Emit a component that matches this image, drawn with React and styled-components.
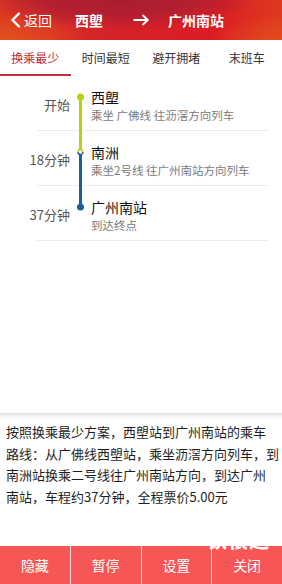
import React from 'react';
import styled, { createGlobalStyle } from 'styled-components';

const GlobalStyle = createGlobalStyle`
  html, body {
    margin: 0;
    padding: 0;
    background: #fff;
  }
  body {
    font-family: "Noto Sans CJK SC", "Noto Sans", sans-serif;
  }
`;

const Page = styled.div`
  position: relative;
  width: 282px;
  height: 584px;
  display: flex;
  flex-direction: column;
  overflow: hidden;
  background: #fff;
`;

const Header = styled.header`
  height: 40px;
  flex: none;
  display: flex;
  align-items: center;
  color: #fff;
  font-size: 14px;
  background:
    radial-gradient(ellipse 140px 34px at 120px -4px, #a91c33 0%, #b31f30 55%, rgba(179, 31, 48, 0) 100%),
    radial-gradient(ellipse 90px 30px at 0px 44px, #e2561c 0%, rgba(226, 86, 28, 0) 100%),
    radial-gradient(ellipse 80px 30px at 290px 44px, #e2501c 0%, rgba(226, 80, 28, 0) 100%),
    linear-gradient(90deg, #dd3a22 0%, #d42229 40%, #dc1c24 75%, #df3a1f 100%);
`;

const Back = styled.div`
  display: flex;
  align-items: center;
  gap: 3px;
  padding-left: 10px;
  width: 75px;
  box-sizing: border-box;
`;

const Station = styled.span`
  font-weight: 700;
  width: ${p => p.$w}px;
`;

const ArrowBox = styled.span`
  width: 35px;
  display: flex;
  align-items: center;
`;

const Tabs = styled.nav`
  height: 36px;
  flex: none;
  display: grid;
  grid-template-columns: repeat(4, 1fr);
  background: #fff;
`;

const Tab = styled.div`
  display: flex;
  align-items: center;
  justify-content: center;
  font-size: 12px;
  color: ${p => (p.$active ? '#c2282f' : '#333')};
  border-bottom: 2px solid ${p => (p.$active ? '#c2303a' : 'transparent')};
`;

const List = styled.section`
  flex: none;
`;

const Row = styled.div`
  margin: 0 14px 0 37px;
  height: 54px;
  border-bottom: 1px solid #ececec;
  display: grid;
  grid-template-columns: 33px 21px 1fr;
  align-items: center;
`;

const Label = styled.div`
  display: flex;
  justify-content: flex-end;
  font-size: 13px;
  color: #555;
  white-space: nowrap;
  margin-top: 3px;
`;

const Track = styled.svg`
  align-self: start;
  overflow: visible;
  display: block;
`;

const Info = styled.div`
  align-self: start;
  padding-top: 12px;
`;

const Title = styled.div`
  font-size: 14px;
  line-height: 18px;
  color: #111;
`;

const Sub = styled.div`
  margin-top: 1px;
  font-size: 11.5px;
  line-height: 16px;
  color: #7a7a7a;
  white-space: nowrap;
`;

const Spacer = styled.div`
  flex: 1;
`;

const Panel = styled.section`
  flex: none;
  height: 133px;
  box-sizing: border-box;
  padding: 8px 0 0 6px;
  font-size: 13px;
  line-height: 21.7px;
  color: #1e1e1e;
  background: linear-gradient(180deg, #e2e2e2 0px, #f6f6f6 4px, #fff 7px);
`;

const Line = styled.span`
  display: block;
  white-space: nowrap;
`;

const Bar = styled.footer`
  height: 38px;
  flex: none;
  display: grid;
  grid-template-columns: repeat(4, 1fr);
  gap: 1px;
  background: #fbdada;
`;

const BarButton = styled.div`
  background: #f75656;
  color: #fff;
  font-size: 14px;
  display: flex;
  align-items: center;
  justify-content: center;
`;

const Watermark = styled.div`
  position: absolute;
  right: 12px;
  bottom: 30px;
  font-size: 20px;
  font-weight: 700;
  color: #fff;
  letter-spacing: 1px;
`;

const GREEN = '#b9cf12';
const BLUE = '#1b5f98';

const rows = [
  {
    label: '开始',
    title: '西塱',
    sub: '乘坐 广佛线 往沥滘方向列车',
    track: (
      <>
        <line x1="10.5" y1="21" x2="10.5" y2="55" stroke={GREEN} strokeWidth="3" />
        <circle cx="10.5" cy="21" r="3.5" fill={GREEN} />
      </>
    ),
  },
  {
    label: '18分钟',
    title: '南洲',
    sub: '乘坐2号线 往广州南站方向列车',
    track: (
      <>
        <line x1="10.5" y1="0" x2="10.5" y2="19" stroke={GREEN} strokeWidth="3" />
        <line x1="10.5" y1="23" x2="10.5" y2="55" stroke={BLUE} strokeWidth="3" />
        <path d="M8 21 a2.5 2.5 0 0 1 5 0" fill="none" stroke={GREEN} strokeWidth="1.4" />
        <path d="M13 21 a2.5 2.5 0 0 1 -5 0" fill="none" stroke={BLUE} strokeWidth="1.4" />
      </>
    ),
  },
  {
    label: '37分钟',
    title: '广州南站',
    sub: '到达终点',
    track: (
      <>
        <line x1="10.5" y1="0" x2="10.5" y2="21" stroke={BLUE} strokeWidth="3" />
        <circle cx="10.5" cy="21" r="3.5" fill={BLUE} />
      </>
    ),
  },
];

const tabs = ['换乘最少', '时间最短', '避开拥堵', '末班车'];
const actions = ['隐藏', '暂停', '设置', '关闭'];

const App = () => {
  return (
    <Page>
      <GlobalStyle />
      <Header>
        <Back>
          <svg width="11" height="16" viewBox="0 0 11 16">
            <path d="M9 1.5 L2.5 8 L9 14.5" fill="none" stroke="#fff" strokeWidth="2.4" strokeLinecap="round" strokeLinejoin="round" />
          </svg>
          <span>返回</span>
        </Back>
        <Station $w={58}>西塱</Station>
        <ArrowBox>
          <svg width="16" height="12" viewBox="0 0 16 12">
            <path d="M0.5 6 H14.5 M9.5 1 L14.8 6 L9.5 11" fill="none" stroke="#fff" strokeWidth="1.8" strokeLinejoin="round" />
          </svg>
        </ArrowBox>
        <Station $w={80}>广州南站</Station>
      </Header>

      <Tabs>
        {tabs.map((t, i) => (
          <Tab key={t} $active={i === 0}>
            {t}
          </Tab>
        ))}
      </Tabs>

      <List>
        {rows.map(r => (
          <Row key={r.title}>
            <Label>{r.label}</Label>
            <Track width="21" height="54" viewBox="0 0 21 54">
              {r.track}
            </Track>
            <Info>
              <Title>{r.title}</Title>
              <Sub>{r.sub}</Sub>
            </Info>
          </Row>
        ))}
      </List>

      <Spacer />

      <Panel>
        <Line>按照换乘最少方案，西塱站到广州南站的乘车</Line>
        <Line>路线：从广佛线西塱站，乘坐沥滘方向列车，到</Line>
        <Line>南洲站换乘二号线往广州南站方向，到达广州</Line>
        <Line>南站，车程约37分钟，全程票价5.00元</Line>
      </Panel>

      <Bar>
        {actions.map(a => (
          <BarButton key={a}>{a}</BarButton>
        ))}
      </Bar>
      <Watermark>铁很运</Watermark>
    </Page>
  );
};

export default App;
